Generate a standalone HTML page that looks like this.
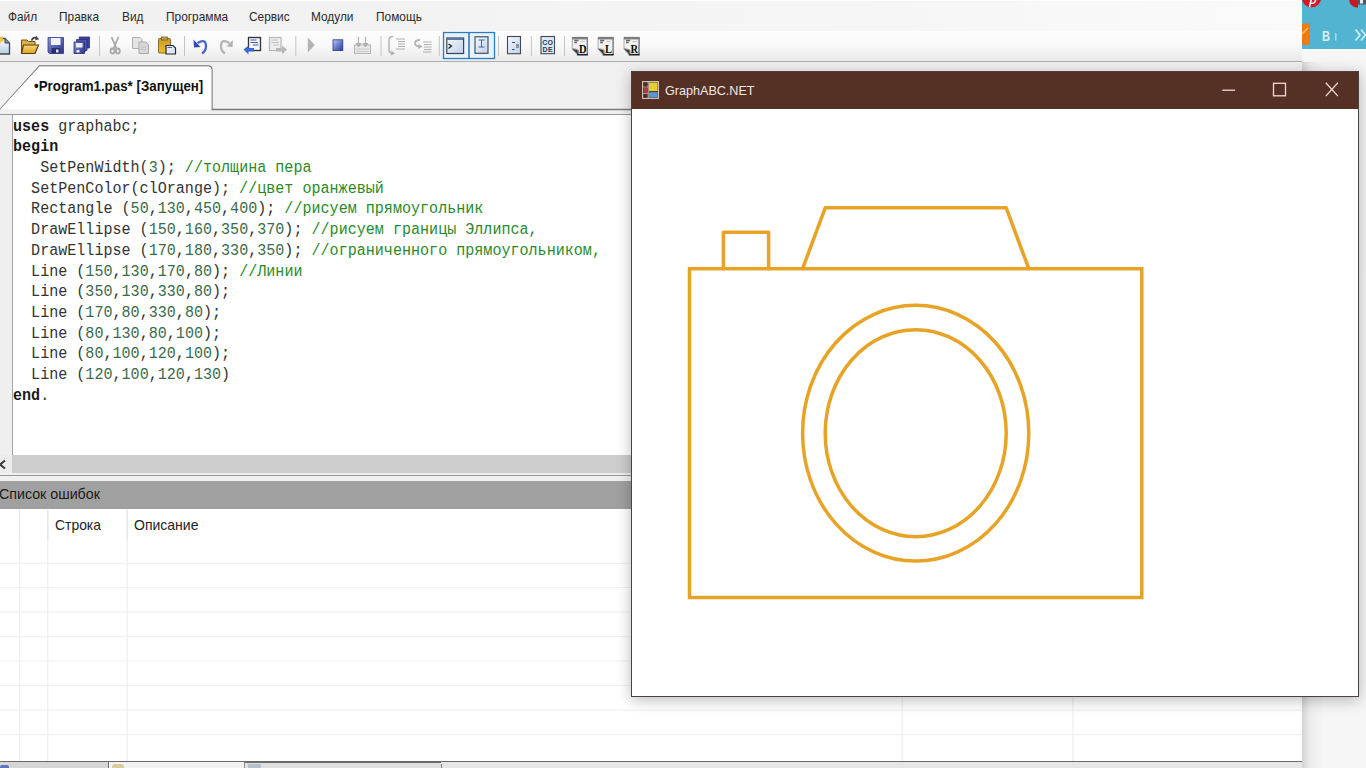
<!DOCTYPE html>
<html><head><meta charset="utf-8">
<style>
*{margin:0;padding:0;box-sizing:border-box}
html,body{width:1366px;height:768px;overflow:hidden;background:#f4f4f4;font-family:"Liberation Sans",sans-serif}
.a{position:absolute}
.t{position:absolute;white-space:pre;transform-origin:0 0;line-height:1}
#code{position:absolute;left:13px;top:116.2px;font-family:"Liberation Mono",monospace;font-size:13.33px;line-height:17px;white-space:pre;transform-origin:0 0;transform:scale(1.1308,1.218);color:#333}
#code b{font-weight:bold;color:#1a1a1a}
.n{color:#3b6b4b}
.c{color:#2a8a2a}
</style></head><body>
<!-- browser background right -->
<div class="a" style="left:1300px;top:0;width:66px;height:48.5px;background:#52b4d0"></div>
<div class="a" style="left:1300px;top:48.5px;width:66px;height:720px;background:linear-gradient(#f8f8f8,#f4f4f4 20px,#f6f6f6)"></div>
<div class="a" style="left:1302px;top:62px;width:22px;height:706px;background:linear-gradient(to right,rgba(0,0,0,0.14),rgba(0,0,0,0.04) 8px,rgba(0,0,0,0))"></div>
<svg class="a" style="left:1300px;top:0" width="66" height="50">
  <circle cx="11.5" cy="-2.5" r="9.8" fill="#d8182a"/>
  <path d="M9.5 7 L11.5 -2 Q16 -3 15.5 0.5 Q15 4 10.5 3" fill="none" stroke="#fff" stroke-width="1.6"/>
  <path d="M49 -2 Q49 6 56 7.5 L58 7.5 L58 -2 Z" fill="#c81828"/>
  <rect x="58" y="0" width="8" height="4.5" fill="#505860"/>
  <rect x="60" y="0" width="3" height="3.5" fill="#e8e8e8"/>
  <rect x="1.5" y="23.5" width="8.5" height="21.5" rx="2" fill="#f07a10"/>
  <path d="M2 34 L8 28" stroke="#f8c870" stroke-width="1.5"/>
  <text x="0" y="0" font-family="Liberation Sans" font-weight="bold" font-size="13.5" fill="#d4f2fa" transform="translate(22 40.6) scale(0.82 1.12)">B</text>
  <rect x="35" y="33" width="1.5" height="7.5" fill="#a8dcec"/>
  <path d="M55.5 29.5 L60 35 L55.5 40.5 M61 29.5 L65.5 35 L61 40.5" fill="none" stroke="#c8eef8" stroke-width="1.8"/>
</svg>

<!-- IDE -->
<div class="a" style="left:1301px;top:62px;width:1.3px;height:706px;background:#8c8c8c"></div>
<div class="a" id="ide" style="left:0;top:0;width:1301.5px;height:768px;background:#f0f0f0;overflow:hidden">
  <!-- menu bar -->
  <div class="a" style="left:0;top:0;width:1302px;height:31px;background:linear-gradient(to right,#f0f0f0,#f4f4f4 50%,#fafafa);border-top:1.5px solid #fff"></div>
  <div class="t" style="left:8px;top:10.3px;font-size:10.5px;transform:scale(1.13,1.22);color:#2a2a2a">Файл</div>
  <div class="t" style="left:59px;top:10.3px;font-size:10.5px;transform:scale(1.13,1.22);color:#2a2a2a">Правка</div>
  <div class="t" style="left:122px;top:10.3px;font-size:10.5px;transform:scale(1.13,1.22);color:#2a2a2a">Вид</div>
  <div class="t" style="left:166px;top:10.3px;font-size:10.5px;transform:scale(1.13,1.22);color:#2a2a2a">Программа</div>
  <div class="t" style="left:249px;top:10.3px;font-size:10.5px;transform:scale(1.13,1.22);color:#2a2a2a">Сервис</div>
  <div class="t" style="left:311px;top:10.3px;font-size:10.5px;transform:scale(1.13,1.22);color:#2a2a2a">Модули</div>
  <div class="t" style="left:376px;top:10.3px;font-size:10.5px;transform:scale(1.13,1.22);color:#2a2a2a">Помощь</div>
  <!-- toolbar -->
  <div class="a" style="left:0;top:30.5px;width:1302px;height:31.5px;background:linear-gradient(#fdfdfd,#f9f9f9 45%,#ececec 92%);border-bottom:1.5px solid #adadad"></div>
  <svg class="a" style="left:0;top:0" width="700" height="62">
    <defs>
      <linearGradient id="gPage" x1="0" y1="0" x2="0" y2="1"><stop offset="0" stop-color="#ffffff"/><stop offset="1" stop-color="#b8cce0"/></linearGradient>
      <linearGradient id="gFold" x1="0" y1="0" x2="0" y2="1"><stop offset="0" stop-color="#f8d878"/><stop offset="1" stop-color="#e0a020"/></linearGradient>
      <linearGradient id="gFlop" x1="0" y1="0" x2="1" y2="1"><stop offset="0" stop-color="#8c94e0"/><stop offset="1" stop-color="#2a3080"/></linearGradient>
      <linearGradient id="gBlue" x1="0" y1="0" x2="1" y2="1"><stop offset="0" stop-color="#b8c8f8"/><stop offset="1" stop-color="#2038a0"/></linearGradient>
      <linearGradient id="gCon" x1="0" y1="0" x2="1" y2="1"><stop offset="0" stop-color="#f4f8fc"/><stop offset="1" stop-color="#c0d0e8"/></linearGradient>
      <linearGradient id="gGold" x1="0" y1="0" x2="0" y2="1"><stop offset="0" stop-color="#c89830"/><stop offset="1" stop-color="#f0c020"/></linearGradient>
      <linearGradient id="gTb" x1="0" y1="0" x2="0" y2="1"><stop offset="0" stop-color="#f8f8f8"/><stop offset="1" stop-color="#ececec"/></linearGradient>
    </defs>
    <!-- new -->
    <path d="M-8 38.5 H5 L9.5 43 V54 H-8 Z" fill="url(#gPage)" stroke="#3c4650" stroke-width="1.3"/>
    <path d="M5 38.5 V43 H9.5" fill="#8090a0" stroke="#3c4650" stroke-width="1"/>
    <path d="M-2 35 L1 37 L3.5 36 L2.5 39 L4.5 41 L1.5 41.5 L0 44 L-1 41 Z" fill="#f0c840"/>
    <!-- open -->
    <path d="M21.5 40 H27 L28.5 41.5 H35 V53.5 H21.5 Z" fill="#d8b050" stroke="#705018" stroke-width="1"/>
    <path d="M23.5 45 H38.5 L35 53.5 H21.5 Z" fill="url(#gFold)" stroke="#5a3c10" stroke-width="1.2"/>
    <path d="M31.5 40.5 Q33 37 36.5 37.8" fill="none" stroke="#3c4450" stroke-width="1.8"/>
    <path d="M36 35.8 L39.2 39.2 L35.2 40.2 Z" fill="#3c4450"/>
    <!-- save -->
    <path d="M48 37.5 H63.5 V53.5 H49.5 L48 52 Z" fill="url(#gFlop)" stroke="#303a80" stroke-width="0.8"/>
    <rect x="51" y="38" width="9.5" height="7" fill="#eef2fa"/>
    <rect x="51.5" y="48" width="8.5" height="5.5" fill="#283070"/>
    <rect x="56" y="49.5" width="2.5" height="3" fill="#e0e8f8"/>
    <!-- save all -->
    <path d="M79 37 H89.5 V48 H86 V51 H84 Z" fill="#3a40a0" stroke="#2a3070" stroke-width="0.8"/>
    <path d="M76.5 39.5 H87 V50.5 H84 V52.5 H76.5 Z" fill="#4c54b4" stroke="#2a3070" stroke-width="0.8"/>
    <path d="M74 42 H84.5 V53.5 H74 Z" fill="url(#gFlop)" stroke="#2a3070" stroke-width="0.8"/>
    <rect x="76" y="43" width="6.5" height="4.5" fill="#e8ecf8"/>
    <rect x="76.5" y="50" width="3" height="2.5" fill="#e8ecf8"/>
    <line x1="99.5" y1="36" x2="99.5" y2="56" stroke="#c4c4c4" stroke-width="1"/>
    <!-- cut -->
    <g stroke="#a8a8a8" fill="none" stroke-width="1.8">
      <path d="M111.5 37 L116.5 48.5 M118.5 37 L113.5 48.5"/>
      <ellipse cx="112.5" cy="51" rx="2" ry="2.5"/><ellipse cx="117.8" cy="51" rx="2" ry="2.5"/>
    </g>
    <!-- copy -->
    <path d="M132.5 37.5 H140 L142 39.5 V48.5 H132.5 Z" fill="#e4e4e4" stroke="#b0b0b0" stroke-width="1"/>
    <path d="M139 42 H146 L148.5 44.5 V53.5 H139 Z" fill="#d8d8d8" stroke="#a8a8a8" stroke-width="1"/>
    <path d="M141 47 H146 M141 49.5 H146" stroke="#b8b8b8" stroke-width="0.8"/>
    <!-- paste -->
    <rect x="158.5" y="38.5" width="12" height="14.5" rx="1" fill="url(#gGold)" stroke="#806020" stroke-width="0.9"/>
    <rect x="161.5" y="37" width="6" height="3" fill="#c0a050" stroke="#705010" stroke-width="0.7"/>
    <path d="M166 45.5 H173 L175.5 48 V54 H166 Z" fill="#e0e8f4" stroke="#202830" stroke-width="1.2"/>
    <path d="M167.5 47.5 H172" stroke="#4060a0" stroke-width="1"/>
    <line x1="184.5" y1="36" x2="184.5" y2="56" stroke="#c4c4c4" stroke-width="1"/>
    <!-- undo -->
    <path d="M197.5 43 Q206 38 206 46 Q206 51 202 53.5" fill="none" stroke="#4a64c8" stroke-width="2.3"/>
    <path d="M193.5 39.5 L194 47.5 L200.5 47 Z" fill="#3048b0"/>
    <!-- redo -->
    <path d="M229.5 43 Q221 38 221 46 Q221 51 225 53.5" fill="none" stroke="#b4b4b4" stroke-width="2.3"/>
    <path d="M233 40 L232.5 47 L226.5 46.5 Z" fill="#b0b0b0"/>
    <!-- blue load -->
    <rect x="248.5" y="37.5" width="12" height="13" fill="#f4f6fc" stroke="#303038" stroke-width="1.3"/>
    <path d="M250.5 40 H256.5 M250.5 42.5 H258 M253 45 H258.5" stroke="#4858a8" stroke-width="1.2"/>
    <path d="M243.5 49.5 L248.5 45.5 V48 H254 V51.5 H248.5 V54.5 Z" fill="#3a6ad0"/>
    <!-- gray -->
    <rect x="269.5" y="37.5" width="11.5" height="13" fill="#eeeeee" stroke="#b8b8b8" stroke-width="1.2"/>
    <path d="M271.5 40 H277.5 M271.5 42.5 H279 M273 45 H279" stroke="#c0c0c0" stroke-width="1"/>
    <path d="M287 49.5 L282 45.5 V48 H276 V51.5 H282 V54.5 Z" fill="#b8b8b8"/>
    <line x1="295.8" y1="36" x2="295.8" y2="56" stroke="#c4c4c4" stroke-width="1"/>
    <!-- play -->
    <path d="M307.8 37.5 L314.8 45 L307.8 52.5 Z" fill="#b4b4b4"/>
    <!-- stop -->
    <rect x="333" y="39.8" width="9.8" height="10.8" fill="url(#gBlue)" stroke="#2a3888" stroke-width="0.8"/>
    <!-- gray 3 -->
    <rect x="354.5" y="45" width="16" height="8.5" fill="#e8e8e8" stroke="#b4b4b4" stroke-width="1"/>
    <path d="M356 49 H369 M356 51.5 H369" stroke="#c4c4c4" stroke-width="0.8"/>
    <path d="M358.5 37 V46 M365.5 37 V46" stroke="#b0b0b0" stroke-width="1.2"/>
    <path d="M356 43 L358.5 47 L361 43 M363 43 L365.5 47 L368 43" fill="#b0b0b0" stroke="#b0b0b0" stroke-width="1"/>
    <line x1="381" y1="36" x2="381" y2="56" stroke="#c4c4c4" stroke-width="1"/>
    <!-- step into -->
    <path d="M393 36.5 Q389 36.5 389 40 V50 Q389 53 392 53" fill="none" stroke="#b4b4b4" stroke-width="1.5"/>
    <path d="M391.5 50.5 L395 53.5 L391 55.5 Z" fill="#b0b0b0"/>
    <path d="M396 39 H405 M398 41.5 H405 M398 44 H405 M398 46.5 H405 M396 49 H405" stroke="#b0b0b0" stroke-width="1.1"/>
    <!-- step over -->
    <path d="M420 40 Q415 40 415 43.5 Q415 46 419 46.5" fill="none" stroke="#b4b4b4" stroke-width="1.8"/>
    <path d="M418.5 44 L422.5 46.5 L418.5 49 Z" fill="#b0b0b0"/>
    <path d="M423 42 H431.5 M424 44.5 H431.5 M424 47 H431.5 M424 49.5 H431.5 M423 52 H431.5" stroke="#b0b0b0" stroke-width="1.1"/>
    <line x1="439.3" y1="36" x2="439.3" y2="56" stroke="#c4c4c4" stroke-width="1"/>
    <!-- pressed buttons -->
    <rect x="443.5" y="32.5" width="51" height="26" fill="#e6f2fc" stroke="#2e7cbc" stroke-width="1.3"/>
    <line x1="469" y1="32.5" x2="469" y2="58.5" stroke="#2e7cbc" stroke-width="1.6"/>
    <rect x="446.8" y="38" width="16.8" height="15.5" fill="url(#gCon)" stroke="#3a4450" stroke-width="1.2"/>
    <rect x="447" y="38" width="16.4" height="2" fill="#5a78a8"/>
    <path d="M448.5 44 L451.5 46 L448.5 48.5" fill="none" stroke="#20242c" stroke-width="1.3"/>
    <rect x="475" y="36.8" width="13" height="16.5" fill="url(#gCon)" stroke="#3a4450" stroke-width="1.1"/>
    <path d="M478.5 40 H484.5 M478.5 47 H484.5 M481.5 40 V47" stroke="#3a68a8" stroke-width="1"/>
    <line x1="498.5" y1="36" x2="498.5" y2="56" stroke="#c4c4c4" stroke-width="1"/>
    <!-- doc icon -->
    <rect x="507.5" y="36.5" width="13" height="17.2" fill="url(#gCon)" stroke="#404850" stroke-width="1.1"/>
    <path d="M512 42.5 H515 M516 45 H519 M516 47 H519 M512 49.5 H514.5" stroke="#3a4a70" stroke-width="1"/>
    <line x1="531.4" y1="36" x2="531.4" y2="56" stroke="#c4c4c4" stroke-width="1"/>
    <!-- CODE -->
    <rect x="541" y="36.5" width="13.5" height="17.2" fill="#dce8f4" stroke="#404850" stroke-width="1.1"/>
    <text x="547.7" y="44.5" font-family="Liberation Sans" font-weight="bold" font-size="7" fill="#2a3a60" text-anchor="middle" letter-spacing="0.3">CO</text>
    <text x="547.7" y="51.8" font-family="Liberation Sans" font-weight="bold" font-size="7" fill="#2a3a60" text-anchor="middle" letter-spacing="0.3">DE</text>
    <line x1="564.5" y1="36" x2="564.5" y2="56" stroke="#c4c4c4" stroke-width="1"/>
    <!-- D L R -->
    <g>    
      <path d="M572.3 37.3 H587.6 V55 H577.5 L572.3 49.2 Z" fill="#f2f2f2" stroke="#9a9a9a" stroke-width="0.8"/>
      <rect x="572.2" y="37" width="15.6" height="2.4" fill="#7c7c7c"/>
      <rect x="586.6" y="37" width="1.3" height="18" fill="#808080"/>
      <rect x="577" y="53.9" width="10.9" height="1.5" fill="#202020"/>
      <path d="M572.2 48.8 L578.5 55.3 L578.5 50 Z" fill="#3a3a3a"/>
      <path d="M572.5 48.5 L577.5 49.5 L578.5 54" fill="none" stroke="#909090" stroke-width="0.8"/>
      <path d="M574.3 40.5 H578.5 M574.3 42.5 H577" stroke="#686868" stroke-width="1.3"/>
      <path d="M580.5 41.5 H585" stroke="#c8c8c8" stroke-width="1.2"/>
    </g>
    <text x="579" y="52.9" font-family="Liberation Serif" font-weight="bold" font-size="10" fill="#0a0a0a" transform="translate(579 52.9) scale(1.05 1.2) translate(-579 -52.9)">D</text>
    <g transform="translate(25.8 0)">    
      <path d="M572.3 37.3 H587.6 V55 H577.5 L572.3 49.2 Z" fill="#f2f2f2" stroke="#9a9a9a" stroke-width="0.8"/>
      <rect x="572.2" y="37" width="15.6" height="2.4" fill="#7c7c7c"/>
      <rect x="586.6" y="37" width="1.3" height="18" fill="#808080"/>
      <rect x="577" y="53.9" width="10.9" height="1.5" fill="#202020"/>
      <path d="M572.2 48.8 L578.5 55.3 L578.5 50 Z" fill="#3a3a3a"/>
      <path d="M572.5 48.5 L577.5 49.5 L578.5 54" fill="none" stroke="#909090" stroke-width="0.8"/>
      <path d="M574.3 40.5 H578.5 M574.3 42.5 H577" stroke="#686868" stroke-width="1.3"/>
      <path d="M580.5 41.5 H585" stroke="#c8c8c8" stroke-width="1.2"/>
    </g>
    <text x="605" y="52.9" font-family="Liberation Serif" font-weight="bold" font-size="10" fill="#0a0a0a" transform="translate(605 52.9) scale(1.05 1.2) translate(-605 -52.9)">L</text>
    <g transform="translate(51.7 0)">    
      <path d="M572.3 37.3 H587.6 V55 H577.5 L572.3 49.2 Z" fill="#f2f2f2" stroke="#9a9a9a" stroke-width="0.8"/>
      <rect x="572.2" y="37" width="15.6" height="2.4" fill="#7c7c7c"/>
      <rect x="586.6" y="37" width="1.3" height="18" fill="#808080"/>
      <rect x="577" y="53.9" width="10.9" height="1.5" fill="#202020"/>
      <path d="M572.2 48.8 L578.5 55.3 L578.5 50 Z" fill="#3a3a3a"/>
      <path d="M572.5 48.5 L577.5 49.5 L578.5 54" fill="none" stroke="#909090" stroke-width="0.8"/>
      <path d="M574.3 40.5 H578.5 M574.3 42.5 H577" stroke="#686868" stroke-width="1.3"/>
      <path d="M580.5 41.5 H585" stroke="#c8c8c8" stroke-width="1.2"/>
    </g>
    <text x="630.5" y="52.9" font-family="Liberation Serif" font-weight="bold" font-size="10" fill="#0a0a0a" transform="translate(630.5 52.9) scale(1.05 1.2) translate(-630.5 -52.9)">R</text>
  </svg>
  <!-- tab strip -->
  <div class="a" style="left:0;top:62px;width:1302px;height:52px;background:#f0f0f0"></div>
  <svg class="a" style="left:0;top:62px" width="1302" height="54">
    <path d="M0 47.5 L39.5 4 L208 4 Q212 4 212 8 L212 47.5 L1302 47.5" fill="none" stroke="#7a7a7a" stroke-width="1.3"/>
    <path d="M0 47.5 L39.5 4.5 L208 4.5 Q211.4 4.5 211.4 8 L211.4 47.5 Z" fill="#fff"/>
    <line x1="0" y1="52.6" x2="1302" y2="52.6" stroke="#9a9a9a" stroke-width="1.4"/>
  </svg>
  <div class="t" style="left:34px;top:80px;font-size:11.8px;font-weight:bold;transform:scale(1.13,1.22);color:#111">•Program1.pas* [Запущен]</div>
  <!-- editor -->
  <div class="a" style="left:0;top:115.3px;width:1302px;height:339.7px;background:#fff"></div>
  <div class="a" style="left:0;top:115.3px;width:13px;height:339.7px;background:#efefef;border-right:1.2px solid #a4a4a4"></div>
  <div id="code"><b>uses</b> graphabc;
<b>begin</b>
   SetPenWidth(<span class="n">3</span>); <span class="c">//толщина пера</span>
  SetPenColor(clOrange); <span class="c">//цвет оранжевый</span>
  Rectangle (<span class="n">50</span>,<span class="n">130</span>,<span class="n">450</span>,<span class="n">400</span>); <span class="c">//рисуем прямоугольник</span>
  DrawEllipse (<span class="n">150</span>,<span class="n">160</span>,<span class="n">350</span>,<span class="n">370</span>); <span class="c">//рисуем границы Эллипса,</span>
  DrawEllipse (<span class="n">170</span>,<span class="n">180</span>,<span class="n">330</span>,<span class="n">350</span>); <span class="c">//ограниченного прямоугольником,</span>
  Line (<span class="n">150</span>,<span class="n">130</span>,<span class="n">170</span>,<span class="n">80</span>); <span class="c">//Линии</span>
  Line (<span class="n">350</span>,<span class="n">130</span>,<span class="n">330</span>,<span class="n">80</span>);
  Line (<span class="n">170</span>,<span class="n">80</span>,<span class="n">330</span>,<span class="n">80</span>);
  Line (<span class="n">80</span>,<span class="n">130</span>,<span class="n">80</span>,<span class="n">100</span>);
  Line (<span class="n">80</span>,<span class="n">100</span>,<span class="n">120</span>,<span class="n">100</span>);
  Line (<span class="n">120</span>,<span class="n">100</span>,<span class="n">120</span>,<span class="n">130</span>)
<b>end</b>.</div>
  <!-- h scrollbar -->
  <div class="a" style="left:0;top:455px;width:1302px;height:18px;background:#cdcdcd"></div>
  <div class="a" style="left:0;top:455px;width:12px;height:18px;background:#ececec"></div>
  <svg class="a" style="left:0;top:455px" width="12" height="20"><path d="M5 5.5 L0 9.5 L5 13.5" fill="none" stroke="#3a3a3a" stroke-width="2.1"/></svg>
  <div class="a" style="left:0;top:474.7px;width:1302px;height:1.1px;background:#989898"></div>
  <!-- error list header -->
  <div class="a" style="left:0;top:481px;width:1302px;height:28px;background:#a0a0a0"></div>
  <div class="t" style="left:-0.8px;top:487.3px;font-size:12.6px;transform:scale(1.13,1.22);color:#1a1a1a">Список ошибок</div>
  <!-- grid -->
  <div class="a" style="left:0;top:509px;width:1302px;height:252px;background:#fff"></div>
  <svg class="a" style="left:0;top:509px" width="1302" height="252">
    <line x1="0" y1="54.3" x2="1302" y2="54.3" stroke="#f0f0f0" stroke-width="1.2"/>
    <line x1="0" y1="78.5" x2="1302" y2="78.5" stroke="#f0f0f0" stroke-width="1.2"/>
    <line x1="0" y1="103.2" x2="1302" y2="103.2" stroke="#f0f0f0" stroke-width="1.2"/>
    <line x1="0" y1="127.6" x2="1302" y2="127.6" stroke="#f0f0f0" stroke-width="1.2"/>
    <line x1="0" y1="152.0" x2="1302" y2="152.0" stroke="#f0f0f0" stroke-width="1.2"/>
    <line x1="0" y1="176.5" x2="1302" y2="176.5" stroke="#f0f0f0" stroke-width="1.2"/>
    <line x1="0" y1="201.2" x2="1302" y2="201.2" stroke="#f0f0f0" stroke-width="1.2"/>
    <line x1="0" y1="225.7" x2="1302" y2="225.7" stroke="#f0f0f0" stroke-width="1.2"/>
    <line x1="19.5" y1="0" x2="19.5" y2="252" stroke="#eeeeee" stroke-width="1.2"/>
    <line x1="19.5" y1="1" x2="19.5" y2="31" stroke="#e6e6e6" stroke-width="1.2"/>
    <line x1="47.8" y1="0" x2="47.8" y2="252" stroke="#eeeeee" stroke-width="1.2"/>
    <line x1="47.8" y1="1" x2="47.8" y2="31" stroke="#e6e6e6" stroke-width="1.2"/>
    <line x1="127.2" y1="0" x2="127.2" y2="252" stroke="#eeeeee" stroke-width="1.2"/>
    <line x1="127.2" y1="1" x2="127.2" y2="31" stroke="#e6e6e6" stroke-width="1.2"/>
    <line x1="902.2" y1="0" x2="902.2" y2="252" stroke="#eeeeee" stroke-width="1.2"/>
    <line x1="902.2" y1="1" x2="902.2" y2="31" stroke="#e6e6e6" stroke-width="1.2"/>
    <line x1="1073" y1="0" x2="1073" y2="252" stroke="#eeeeee" stroke-width="1.2"/>
    <line x1="1073" y1="1" x2="1073" y2="31" stroke="#e6e6e6" stroke-width="1.2"/>
  </svg>
  <div class="t" style="left:55px;top:518px;font-size:12.3px;transform:scale(1.13,1.22);color:#222">Строка</div>
  <div class="t" style="left:134px;top:518px;font-size:12.4px;transform:scale(1.13,1.22);color:#222">Описание</div>
  <div class="a" style="left:0;top:760.8px;width:1302px;height:1.6px;background:#6a6a6a"></div>
  <div class="a" style="left:0;top:762.4px;width:1302px;height:6px;background:#e6e6e6"></div>
  <div class="a" style="left:0;top:762.4px;width:108px;height:6px;background:#d6d6d6"></div>
  <div class="a" style="left:0;top:764.5px;width:9px;height:4px;background:#5a78b8;border-radius:2px 2px 0 0"></div>
  <div class="a" style="left:107.5px;top:762px;width:1.5px;height:6px;background:#707070"></div>
  <div class="a" style="left:109px;top:762.4px;width:135px;height:6px;background:#f2f2f2"></div>
  <div class="a" style="left:112px;top:763.5px;width:12px;height:5px;background:#d8cca0;border-radius:3px 3px 0 0"></div>
  <div class="a" style="left:244px;top:761.5px;width:197px;height:7px;background:#e0e0e0;border-top:1.6px solid #6a6a6a;border-left:1.2px solid #909090"></div>
  <div class="a" style="left:248px;top:764px;width:13px;height:4px;background:#b8c0cc"></div>
  <div class="a" style="left:441px;top:764px;width:1px;height:4px;background:#808080"></div>
</div>

<!-- GraphABC window -->
<div class="a" style="left:631px;top:71px;width:728px;height:626px;background:#fff;border:1px solid #4a4240;box-shadow:0 3px 14px rgba(0,0,0,0.27)">
  <div class="a" style="left:0;top:0;width:726px;height:37px;background:#553024"></div>
</div>
<div class="t" style="left:665px;top:84px;font-size:11.15px;transform:scale(1.13,1.22);color:#f0e8e4">GraphABC.NET</div>
<svg class="a" style="left:630px;top:70px" width="736" height="40">
  <g transform="translate(12,11)">
    <rect x="0.6" y="0.6" width="15.8" height="16.8" fill="#4a2a22" stroke="#d8c8c0" stroke-width="1.1"/>
    <line x1="6.2" y1="0.6" x2="6.2" y2="17.4" stroke="#d8c8c0" stroke-width="0.9"/>
    <line x1="0.6" y1="6" x2="6.2" y2="6" stroke="#c8b8b0" stroke-width="0.8"/>
    <line x1="0.6" y1="12.5" x2="6.2" y2="12.5" stroke="#c8b8b0" stroke-width="0.8"/>
    <rect x="1.8" y="7" width="3.6" height="4.8" fill="#b83a3a"/>
    <rect x="7" y="1.5" width="8.6" height="8.6" fill="#e0d040"/>
    <rect x="7" y="11.2" width="8.6" height="5.4" fill="#5898d0"/>
  </g>
  <g stroke="#f0dcd4" fill="none" stroke-width="1.3">
    <line x1="592.3" y1="20.2" x2="605.1" y2="20.2"/>
    <rect x="643.5" y="13.3" width="12" height="12.5"/>
    <line x1="695.8" y1="12.8" x2="707.9" y2="26.1"/>
    <line x1="707.9" y1="12.8" x2="695.8" y2="26.1"/>
  </g>
</svg>
<svg class="a" style="left:0;top:0" width="1366" height="768">
  <g fill="none" stroke="#e7a326" stroke-width="3.5">
    <rect x="689.5" y="268.7" width="452.3" height="328.8"/>
    <ellipse cx="915.7" cy="433.2" rx="113.1" ry="127.9"/>
    <ellipse cx="915.7" cy="433.2" rx="90.5" ry="103.5"/>
    <polyline points="802.6,268.7 825.2,207.8 1006.2,207.8 1028.8,268.7" stroke-linejoin="round" stroke-linecap="round"/>
    <polyline points="723.4,268.7 723.4,232.2 768.6,232.2 768.6,268.7" stroke-linejoin="round" stroke-linecap="round"/>
  </g>
</svg>
</body></html>
